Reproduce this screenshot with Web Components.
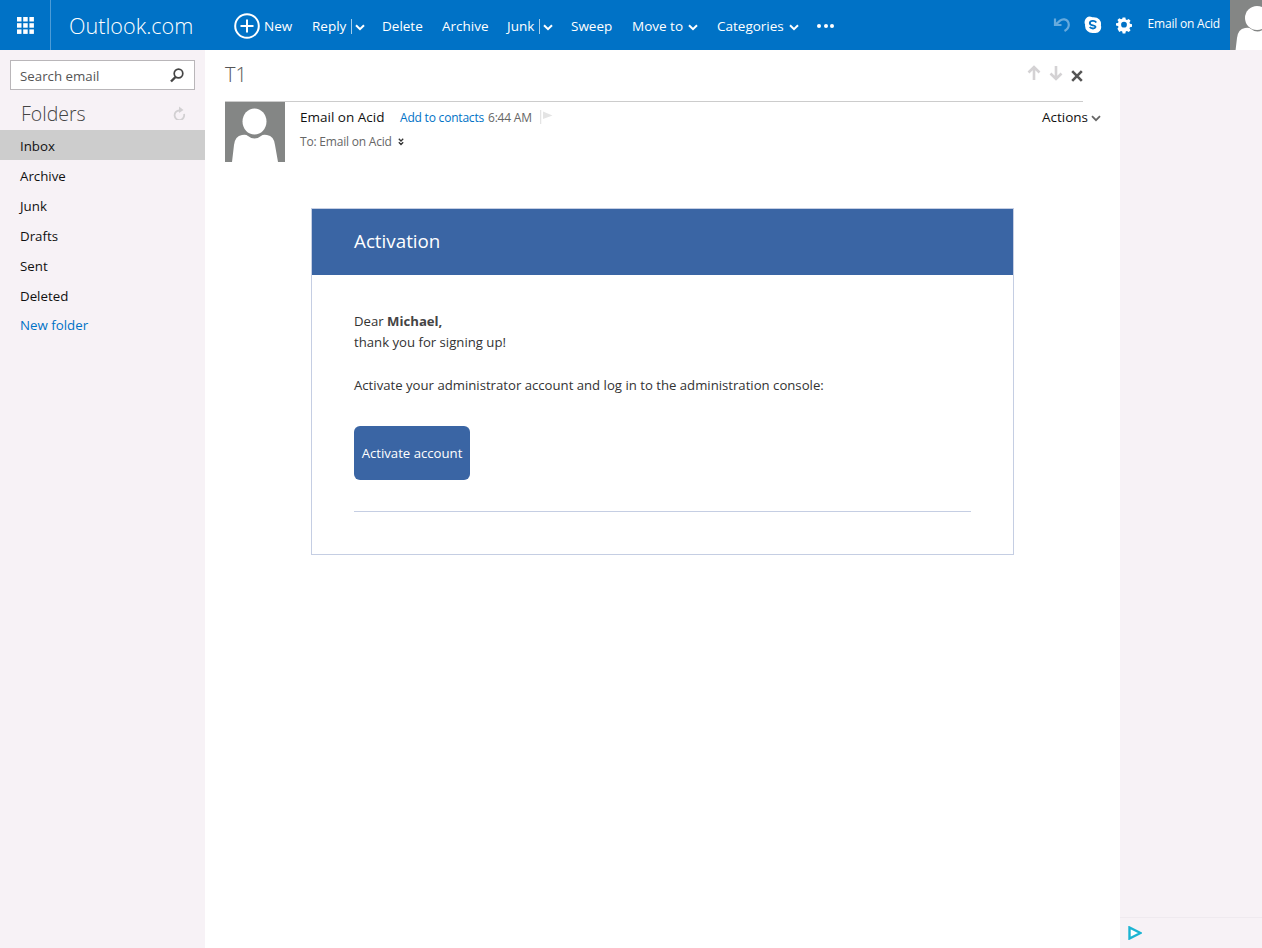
<!DOCTYPE html>
<html>
<head>
<meta charset="utf-8">
<title>Outlook.com</title>
<style>
  html, body { margin: 0; height: 100%; }
  body { font-family: "Open Sans", "Noto Sans", sans-serif; overflow: hidden; }
</style>
</head>
<body>
<ol-app>
  <ol-topbar slot="top">
    <ol-cmd w="58" icon="new" gap="20">New</ol-cmd>
    <ol-cmd w="50" split gap="20">Reply</ol-cmd>
    <ol-cmd w="40" gap="20">Delete</ol-cmd>
    <ol-cmd w="45" gap="20">Archive</ol-cmd>
    <ol-cmd w="44" split gap="20">Junk</ol-cmd>
    <ol-cmd w="41" gap="20">Sweep</ol-cmd>
    <ol-cmd w="65" chevron gap="20">Move to</ol-cmd>
    <ol-cmd w="81" chevron gap="19">Categories</ol-cmd>
  </ol-topbar>
  <ol-sidebar slot="left">
    <ol-folder active>Inbox</ol-folder>
    <ol-folder>Archive</ol-folder>
    <ol-folder>Junk</ol-folder>
    <ol-folder>Drafts</ol-folder>
    <ol-folder>Sent</ol-folder>
    <ol-folder>Deleted</ol-folder>
    <ol-folder link>New folder</ol-folder>
  </ol-sidebar>
  <ol-reading slot="main">
    <ol-activation-card name="Michael"></ol-activation-card>
  </ol-reading>
  <ol-adpane slot="right"></ol-adpane>
</ol-app>

<script>
const CHEVRON = `<svg width="10" height="7" viewBox="0 0 10 7"><path d="M1 1.2 5 5.2 9 1.2" fill="none" stroke="currentColor" stroke-width="2"/></svg>`;
const BODY = 'M7 60 9 43Q10 34 17 33 21 32 23 34 29.500 39 36 34 38 32 42 33 49 34 50 43L53 60Z';

class OlApp extends HTMLElement {
  connectedCallback() {
    this.attachShadow({ mode: 'open' });
    this.shadowRoot.innerHTML = `
      <style>
        :host { display: grid; grid-template: 50px 898px / 205px 915px 142px; width: 1262px; height: 948px; }
        ::slotted([slot=top]) { grid-column: 1 / -1; }
      </style>
      <slot name="top"></slot>
      <slot name="left"></slot>
      <slot name="main"></slot>
      <slot name="right"></slot>
    `;
  }
}

class OlTopbar extends HTMLElement {
  connectedCallback() {
    this.attachShadow({ mode: 'open' });
    this.shadowRoot.innerHTML = `
      <style>
        :host { display: flex; align-items: center; height: 50px; background: #0072c6; color: #fff; font-size: 13.5px; }
        .waffle { height: 50px; display: flex; align-items: center; justify-content: center; border-right: 1px solid #4d9cd7; box-sizing: border-box; width: 51px; }
        .brand { width: 165px; padding: 1px 0 0 18px; box-sizing: border-box; font-size: 21.6px; font-weight: 300; margin-right: 18px; white-space: nowrap; }
        .cmds { display: flex; align-items: center; padding-top: 2px; }
        .dots { width: 17px; height: 4px; display: flex; gap: 2.5px; margin-top: 2px; }
        .dots i { width: 4px; height: 4px; border-radius: 50%; background: #fff; }
        .right { margin-left: auto; display: flex; align-items: center; height: 50px; }
        .name { font-size: 12px; margin: 0 10px 3px 15px; white-space: nowrap; letter-spacing: -.2px; }
        .me { width: 32px; height: 50px; background: #848685; overflow: hidden; }
        svg { display: block; }
      </style>
      <div class="waffle">
        <svg width="17" height="17" viewBox="0 0 17 17" fill="#fff">
          <rect width="4.5" height="4.5"/><rect x="6.2" width="4.5" height="4.5"/><rect x="12.4" width="4.5" height="4.5"/>
          <rect y="6.2" width="4.5" height="4.5"/><rect x="6.2" y="6.2" width="4.5" height="4.5"/><rect x="12.4" y="6.2" width="4.5" height="4.5"/>
          <rect y="12.4" width="4.5" height="4.5"/><rect x="6.2" y="12.4" width="4.5" height="4.5"/><rect x="12.4" y="12.4" width="4.5" height="4.5"/>
        </svg>
      </div>
      <div class="brand">Outlook.com</div>
      <div class="cmds"><slot></slot></div>
      <div class="dots"><i></i><i></i><i></i></div>
      <div class="right">
        <svg width="18" height="18" viewBox="0 0 18 18" style="margin-right:13px"><path d="M2 2.5V9H8.5M2.6 8.6 7 4.6Q9 3 11.4 3.4 15.8 4.400 15.800 9 15.600 12.800 11.500 15" fill="none" stroke="#66aadd" stroke-width="2.200"/></svg>
        <svg width="18" height="18" viewBox="0 0 18 18" style="margin-right:13px"><path d="M5 .5Q7 .5 8.500 1.200 13 .8 15.400 3.500 17.500 6 16.900 9.500 17.800 12 16 14.800 13.700 17.800 10 16.900 6 17.600 3.300 15 .6 12.500 1.100 8.600 -.2 6 1.500 3 3 .500 5 .5Z" fill="#fff"/><path d="M12.300 6.500Q11 4.800 8.800 4.900 6 5 5.800 7 5.800 8.800 8.800 9.400 11.500 9.900 11.500 11 11 12.500 9 12.500 6.800 12.400 5.700 11" fill="none" stroke="#0072c6" stroke-width="1.900"/></svg>
        <svg width="18" height="18" viewBox="0 0 18 18"><path fill="#fff" fill-rule="evenodd" d="M7.300 0h3.400l.5 2.500 1.500.7 2.200-1.400 2.300 2.300-1.400 2.200.7 1.500 2.500.5v3.400l-2.500.5-.7 1.500 1.400 2.200-2.300 2.300-2.200-1.400-1.500.7-.5 2.500H7.300l-.5-2.500-1.500-.7-2.200 1.400L.8 14.200l1.400-2.200-.7-1.500L-1 10V7.300l2.500-.5.700-1.500L.8 3.100l2.300-2.300 2.200 1.400 1.500-.7ZM9 5.400a3.600 3.600 0 1 0 0 7.200 3.600 3.600 0 0 0 0-7.200Z" transform="translate(1.800 1.500) scale(.8)"/></svg>
        <span class="name">Email on Acid</span>
        <div class="me"><svg width="32" height="50" viewBox="0 0 32 50">
          <path d="${BODY}" fill="#fff" transform="translate(-2 -5)"/>
          <ellipse cx="27" cy="18" rx="12" ry="12" fill="#fff"/>
        </svg></div>
      </div>
    `;
  }
}

class OlCmd extends HTMLElement {
  connectedCallback() {
    const w = this.getAttribute('w');
    const gap = this.getAttribute('gap');
    const plus = this.getAttribute('icon') === 'new';
    this.attachShadow({ mode: 'open' });
    this.shadowRoot.innerHTML = `
      <style>
        :host { display: flex; align-items: center; width: ${w}px; margin-right: ${gap}px; white-space: nowrap; flex: none; }
        .sep { flex: none; width: 1px; height: 15px; background: #a5cdea; margin: 0 3px 0 5px; }
        .plus { margin-right: 4px; display: block; flex: none; }
        .ch { margin-left: 5px; display: block; flex: none; }
        .ch.s { margin-left: 0; }
      </style>
      ${plus ? `<svg class="plus" width="26" height="26" viewBox="0 0 26 26"><circle cx="13" cy="13" r="11.800" fill="none" stroke="#fff" stroke-width="2"/><path d="M13 6.500V19.500M6.500 13H19.500" stroke="#fff" stroke-width="2"/></svg>` : ''}
      <slot></slot>
      ${this.hasAttribute('split') ? `<span class="sep"></span><span class="ch s">${CHEVRON}</span>` : ''}
      ${this.hasAttribute('chevron') ? `<span class="ch">${CHEVRON}</span>` : ''}
    `;
  }
}

class OlSidebar extends HTMLElement {
  connectedCallback() {
    this.attachShadow({ mode: 'open' });
    this.shadowRoot.innerHTML = `
      <style>
        :host { display: block; background: #f7f2f6; font-size: 13.3px; }
        .search { margin: 10px 10px 0; height: 30px; box-sizing: border-box; border: 1px solid #b9b6b9; background: #fff; display: flex; align-items: center; justify-content: space-between; padding: 0 10px 0 9px; color: #555; }
        .search span { padding-top: 2px; }
        .head { display: flex; align-items: center; justify-content: space-between; height: 40px; box-sizing: border-box; padding: 6px 19px 0 21px; font-size: 19.500px; font-weight: 300; color: #444; }
        svg { display: block; }
      </style>
      <div class="search"><span>Search email</span>
        <svg width="14" height="15" viewBox="0 0 14 15"><circle cx="8.500" cy="5.500" r="4.300" fill="none" stroke="#444" stroke-width="1.700"/><path d="M5.500 9 1 13.500" stroke="#444" stroke-width="2.400"/></svg>
      </div>
      <div class="head"><span>Folders</span>
        <svg width="13" height="14" viewBox="0 0 13 14"><path d="M10.500 6.500A4.800 4.800 0 1 1 6 3" fill="none" stroke="#d2d0d2" stroke-width="1.800" transform="translate(.5 1.500)"/><path d="M6 .5 10.500 4 6 7Z" fill="#d2d0d2"/></svg>
      </div>
      <slot></slot>
    `;
  }
}

class OlFolder extends HTMLElement {
  connectedCallback() {
    this.attachShadow({ mode: 'open' });
    const link = this.hasAttribute('link');
    this.shadowRoot.innerHTML = `
      <style>
        :host { display: flex; align-items: center; box-sizing: border-box; height: ${link ? 29 : 30}px; padding: ${link ? 0 : 2}px 0 0 20px; color: ${link ? '#0072c6' : '#111'}; }
        :host([active]) { background: #cdcdcd; }
      </style>
      <slot></slot>
    `;
  }
}

class OlReading extends HTMLElement {
  connectedCallback() {
    this.attachShadow({ mode: 'open' });
    this.shadowRoot.innerHTML = `
      <style>
        :host { display: block; background: #fff; padding: 0 19px 0 20px; color: #444; font-size: 12px; }
        .subject { display: flex; align-items: center; justify-content: space-between; height: 52px; width: 858px; box-sizing: border-box; border-bottom: 1px solid #ccc; font-size: 20px; font-weight: 300; color: #555; padding-bottom: 3px; }
        .nav { display: flex; gap: 8px; align-items: center; }
        .nav .up { margin-bottom: 2px; }
        .meta { display: flex; height: 60px; position: relative; }
        .pic { width: 60px; height: 60px; background: #848685; flex: none; }
        .info { padding-left: 15px; flex: 1; }
        .line1 { display: flex; align-items: center; height: 29px; white-space: nowrap; }
        .from { font-size: 13.500px; color: #111; width: 100px; }
        .add { color: #0072c6; width: 88px; letter-spacing: -.2px; padding-top: 1px; }
        .time { color: #666; width: 52px; letter-spacing: -.2px; padding-top: 1px; }
        .to { display: flex; align-items: center; gap: 6px; height: 15px; margin-top: 3px; color: #666; letter-spacing: -.2px; }
        .actions { display: flex; align-items: center; gap: 3px; font-size: 13.500px; color: #111; margin-left: auto; }
        .actions svg { color: #666; margin-top: 3px; }
        .body { display: flex; padding: 46px 0 0 86px; }
        svg { display: block; }
      </style>
      <div class="subject"><span>T1</span>
        <div class="nav">
          <svg class="up" width="14" height="16" viewBox="0 0 14 16"><path d="M7 15V2M1.500 7.500 7 2 12.500 7.500" fill="none" stroke="#d4d2d4" stroke-width="2.600"/></svg>
          <svg class="up" width="14" height="16" viewBox="0 0 14 16"><path d="M7 1V14M1.500 8.500 7 14 12.500 8.500" fill="none" stroke="#d4d2d4" stroke-width="2.600"/></svg>
          <svg width="12" height="12" viewBox="0 0 12 12" style="margin-top:3px"><path d="M1.200 1.200 10.800 10.800M10.800 1.200 1.200 10.800" stroke="#555" stroke-width="2.600"/></svg>
        </div>
      </div>
      <div class="meta">
        <div class="pic"><svg width="60" height="60" viewBox="0 0 60 60">
          <path d="${BODY}" fill="#fff"/>
          <ellipse cx="29.500" cy="19.500" rx="12" ry="13" fill="#fff"/>
        </svg></div>
        <div class="info">
          <div class="line1">
            <span class="from">Email on Acid</span><span class="add">Add to contacts</span><span class="time">6:44 AM</span>
            <svg width="13" height="14" viewBox="0 0 13 14"><path d="M.5 0V14" stroke="#e4e4e4" stroke-width="1.500"/><path d="M3 1.500 12.500 5.500 3 9Z" fill="#e4e4e4"/></svg>
            <span class="actions">Actions <svg width="10" height="7" viewBox="0 0 10 7"><path d="M1 1.200 5 5.200 9 1.200" fill="none" stroke="currentColor" stroke-width="1.800"/></svg></span>
          </div>
          <div class="to">To: Email on Acid
            <svg width="6" height="8" viewBox="0 0 6 8"><path d="M.8.800 3 3 5.200.8M.8 4.300 3 6.500 5.200 4.300" fill="none" stroke="#333" stroke-width="1.300"/></svg>
          </div>
        </div>
      </div>
      <div class="body"><slot></slot></div>
    `;
  }
}

class OlActivationCard extends HTMLElement {
  connectedCallback() {
    const name = this.getAttribute('name');
    this.attachShadow({ mode: 'open' });
    this.shadowRoot.innerHTML = `
      <style>
        :host { display: block; width: 703px; box-sizing: border-box; border: 1px solid #c5cee3; color: #333; font-size: 13.170px; line-height: 21px; }
        h1 { margin: 0; height: 66px; box-sizing: border-box; display: flex; align-items: center; padding: 0 0 1px 42px; background: #3a65a4; color: #fff; font-size: 18.800px; font-weight: 400; }
        .content { padding: 36px 42px 42px; }
        p { margin: 0; }
        b { color: #444; }
        .gap { margin-top: 22px; }
        .btn { display: flex; width: 116px; height: 54px; box-sizing: border-box; padding-top: 1px; margin-top: 30px; align-items: center; justify-content: center; border-radius: 6px; background: #3a65a4; color: #fff; white-space: nowrap; }
        hr { border: 0; height: 1px; background: #c5cee3; margin: 31px 0 0; }
      </style>
      <h1>Activation</h1>
      <div class="content">
        <p>Dear <b>${name},</b></p>
        <p>thank you for signing up!</p>
        <p class="gap">Activate your administrator account and log in to the administration console:</p>
        <div class="btn">Activate account</div>
        <hr>
      </div>
    `;
  }
}

class OlAdpane extends HTMLElement {
  connectedCallback() {
    this.attachShadow({ mode: 'open' });
    this.shadowRoot.innerHTML = `
      <style>
        :host { display: flex; flex-direction: column; justify-content: flex-end; background: #f7f2f6; }
        .foot { height: 31px; box-sizing: border-box; border-top: 1px solid #efeaef; display: flex; align-items: center; padding-left: 8px; }
        svg { display: block; margin-bottom: 1px; }
      </style>
      <div class="foot">
        <svg width="14" height="14" viewBox="0 0 14 14"><path d="M1.500 1.500V12.500L12.500 7Z" fill="#fff" stroke="#1cb4d2" stroke-width="2.400"/></svg>
      </div>
    `;
  }
}

customElements.define('ol-app', OlApp);
customElements.define('ol-topbar', OlTopbar);
customElements.define('ol-cmd', OlCmd);
customElements.define('ol-sidebar', OlSidebar);
customElements.define('ol-folder', OlFolder);
customElements.define('ol-reading', OlReading);
customElements.define('ol-activation-card', OlActivationCard);
customElements.define('ol-adpane', OlAdpane);
</script>
</body>
</html>
